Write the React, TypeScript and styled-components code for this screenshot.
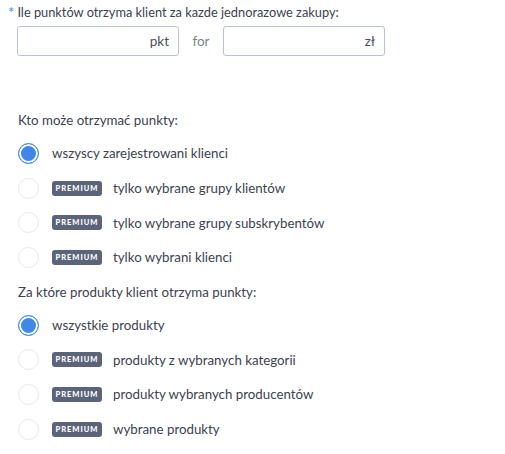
import React from "react";
import styled, { createGlobalStyle } from "styled-components";

const GlobalStyle = createGlobalStyle`
  body {
    margin: 0;
    background: #ffffff;
    font-family: Lato, "Liberation Sans", sans-serif;
    color: #3d4250;
  }
`;

const Page = styled.div`
  width: 505px;
  height: 454px;
  padding: 3px 0 0 8px;
  box-sizing: border-box;
`;

const Label = styled.div`
  font-size: 12.8px;
  line-height: 18px;
  display: flex;
  gap: 3px;
`;

const Star = styled.span`
  color: #3f87e8;
  font-size: 15px;
`;

const InputRow = styled.div`
  display: flex;
  align-items: center;
  margin: 5px 0 0 9px;
`;

const Field = styled.div`
  width: 162px;
  height: 30px;
  box-sizing: border-box;
  border: 1px solid #b9c3d8;
  border-radius: 3px;
  display: flex;
  align-items: center;
  justify-content: flex-end;
  padding-right: 9px;
  font-size: 13.5px;
  color: #4a4f5c;
`;

const For = styled.span`
  width: 44px;
  text-align: center;
  font-size: 13.5px;
  color: #7b7f8a;
`;

const Section = styled.div<{ $top: number }>`
  margin: ${(p) => p.$top}px 0 0 10px;
`;

const Heading = styled.div`
  font-size: 13.3px;
  line-height: 18px;
  margin-bottom: 7px;
`;

const Options = styled.div`
  display: flex;
  flex-direction: column;
`;

const Option = styled.div`
  display: flex;
  align-items: center;
  height: 34.7px;
  font-size: 13.3px;
`;

const Radio = styled.span<{ $checked?: boolean }>`
  width: 21px;
  height: 21px;
  box-sizing: border-box;
  border-radius: 50%;
  border: 1px solid ${(p) => (p.$checked ? "#3f87e8" : "#e6e8ee")};
  background: ${(p) => (p.$checked ? "#3f87e8" : "#fff")};
  box-shadow: ${(p) => (p.$checked ? "inset 0 0 0 2px #fff" : "none")};
  margin-right: 13px;
  flex-shrink: 0;
`;

const Badge = styled.span`
  width: 50px;
  height: 15px;
  border-radius: 3px;
  background: #5c647a;
  color: #fff;
  font-size: 7.5px;
  font-weight: 900;
  letter-spacing: 1px;
  display: inline-flex;
  align-items: center;
  justify-content: center;
  margin-right: 11px;
`;

type Item = { text: string; premium?: boolean; checked?: boolean };

const who: Item[] = [
  { text: "wszyscy zarejestrowani klienci", checked: true },
  { text: "tylko wybrane grupy klientów", premium: true },
  { text: "tylko wybrane grupy subskrybentów", premium: true },
  { text: "tylko wybrani klienci", premium: true },
];

const what: Item[] = [
  { text: "wszystkie produkty", checked: true },
  { text: "produkty z wybranych kategorii", premium: true },
  { text: "produkty wybranych producentów", premium: true },
  { text: "wybrane produkty", premium: true },
];

function OptionList({ items }: { items: Item[] }) {
  return (
    <Options>
      {items.map((it) => (
        <Option key={it.text}>
          <Radio $checked={it.checked} />
          {it.premium && <Badge>PREMIUM</Badge>}
          <span>{it.text}</span>
        </Option>
      ))}
    </Options>
  );
}

export default function App() {
  return (
    <Page>
      <GlobalStyle />
      <Label>
        <Star>*</Star>
        <span>Ile punktów otrzyma klient za kazde jednorazowe zakupy:</span>
      </Label>
      <InputRow>
        <Field>pkt</Field>
        <For>for</For>
        <Field>zł</Field>
      </InputRow>
      <Section $top={55}>
        <Heading>Kto może otrzymać punkty:</Heading>
        <OptionList items={who} />
      </Section>
      <Section $top={8}>
        <Heading>Za które produkty klient otrzyma punkty:</Heading>
        <OptionList items={what} />
      </Section>
    </Page>
  );
}
